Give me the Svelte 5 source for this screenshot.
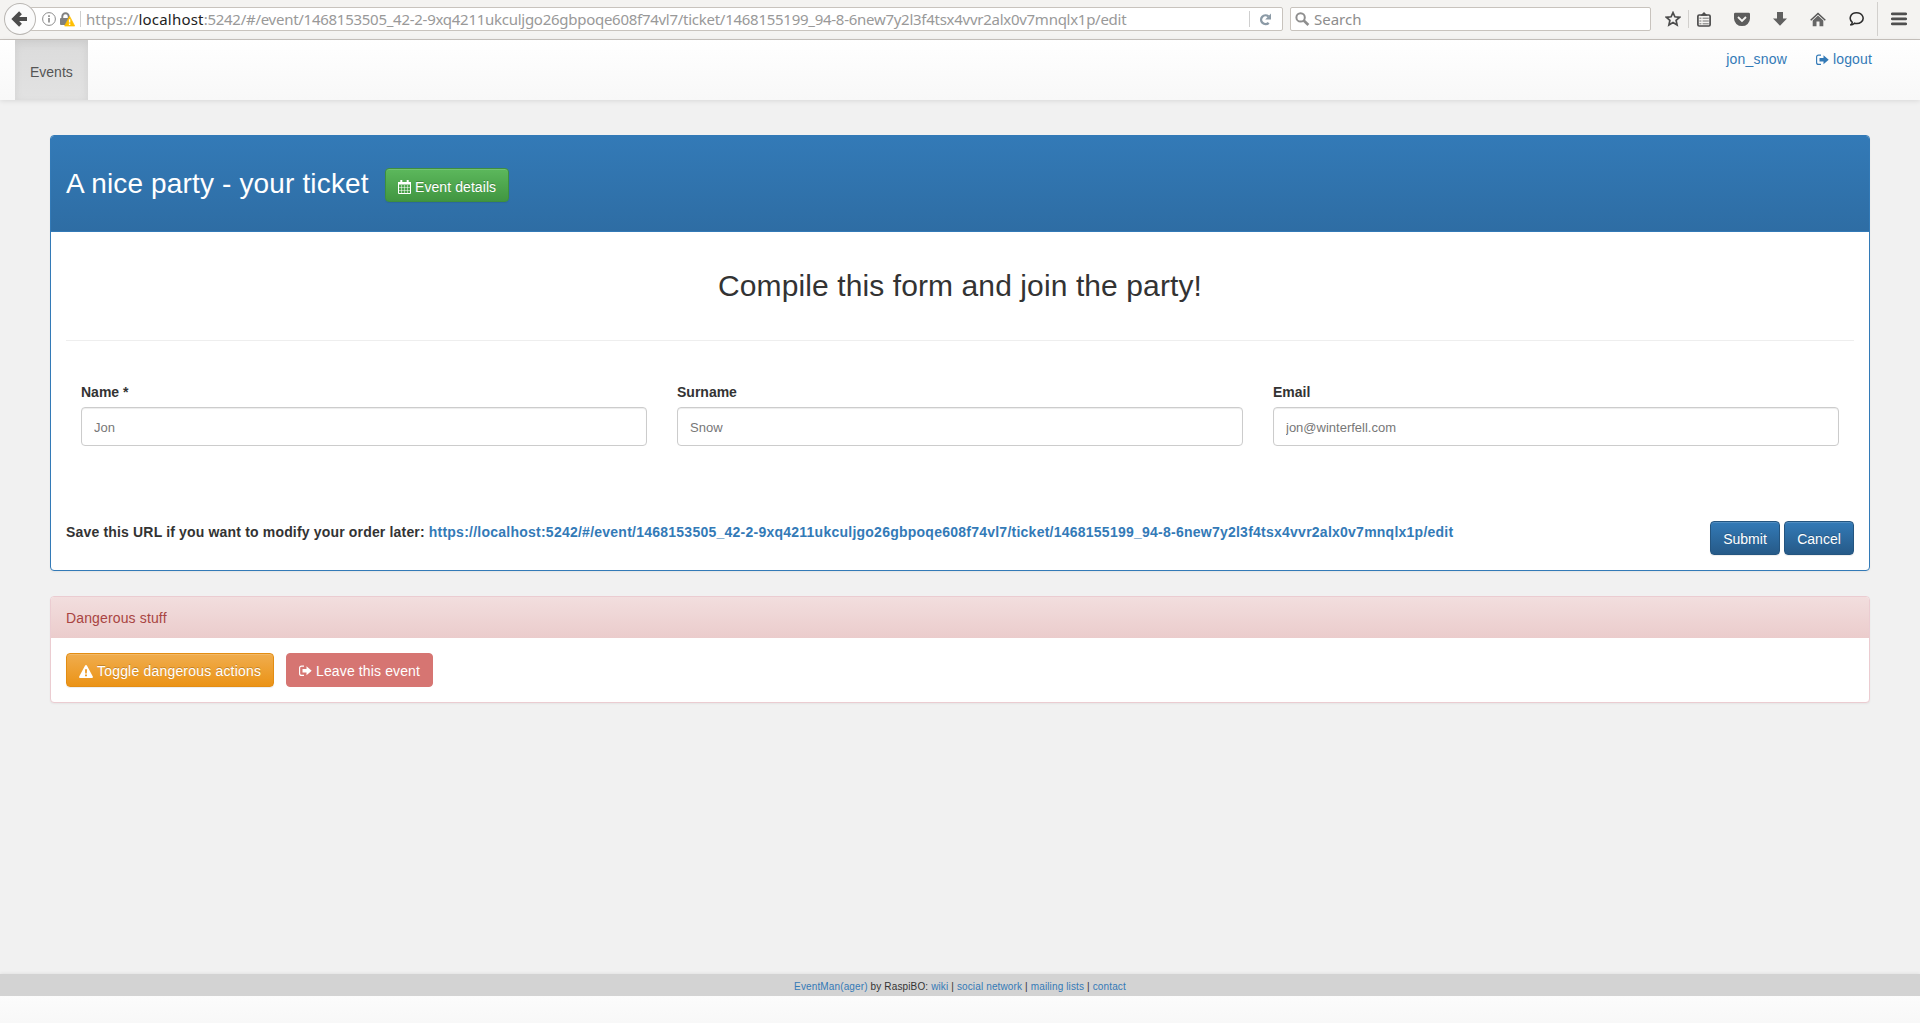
<script>
  const urlTail = ':5242/#/event/1468153505_42-2-9xq4211ukculjgo26gbpoqe608f74vl7/ticket/1468155199_94-8-6new7y2l3f4tsx4vvr2alx0v7mnqlx1p/edit';
  const fields = [
    { label: 'Name *', hint: 'Jon' },
    { label: 'Surname', hint: 'Snow' },
    { label: 'Email', hint: 'jon@winterfell.com' }
  ];
</script>

{#snippet signOut()}
  <svg class="fa out" width="13" height="12" viewBox="0 0 13 12">
    <path d="M5 1.1H2.6Q.6 1.1.6 3.1V8.4Q.6 10.4 2.6 10.4H5" fill="none" stroke="currentColor" stroke-width="1.15" />
    <path d="M3.5 4h4V1.3L12.7 5.8 7.5 10.3V7.6h-4z" fill="currentColor" />
  </svg>
{/snippet}

<div class="page">
  <header class="toolbar">
    <div class="address">
      <span class="back">
        <svg width="32" height="32" viewBox="0 0 32 32"><path d="M16.5 9.8 10.2 16l6.3 6.2M11 16h12" fill="none" stroke="#4c4c4c" stroke-width="4" /></svg>
      </span>
      <svg class="info" width="14" height="14" viewBox="0 0 14 14">
        <circle cx="7" cy="7" r="6.4" fill="none" stroke="#8c8c8c" />
        <path d="M7 6v4.5M7 3.2v1.7" stroke="#8c8c8c" stroke-width="1.7" />
      </svg>
      <svg class="lock" width="15" height="15" viewBox="0 0 15 15">
        <path d="M2.3 6.5V4.5a3.2 3.2 0 0 1 6.4 0v2" fill="none" stroke="#808080" stroke-width="1.9" />
        <rect x="0" y="6" width="10.5" height="7" rx="1" fill="#808080" />
        <path d="M9.6 4.2 14.7 14H4.6z" fill="#ffbf00" stroke="#ffbf00" stroke-width=".7" stroke-linejoin="round" />
        <path d="M9.6 7.2v3.3M9.6 11.4v1.5" stroke="#fff" stroke-width="1.4" />
      </svg>
      <span class="bar"></span>
      <span class="url"><span class="scheme">https://</span><b>localhost</b>{urlTail}</span>
      <span class="bar"></span>
      <svg class="reload" width="13" height="13" viewBox="0 0 13 13">
        <path d="M9.4 3.4A4.4 4.4 0 1 0 9.7 9.8" fill="none" stroke="#8b9aa6" stroke-width="2.4" />
        <path d="M12 .6V6.4H6.2z" fill="#8b9aa6" />
      </svg>
    </div>
    <div class="search">
      <svg width="15" height="15" viewBox="0 0 15 15"><circle cx="5.6" cy="5.4" r="4.2" fill="none" stroke="#8e8e8e" stroke-width="2" /><path d="M8.7 8.5 13.4 13" stroke="#8e8e8e" stroke-width="2.6" /></svg>
      <span>Search</span>
    </div>
    <div class="tools">
      <svg width="16" height="16" viewBox="0 0 16 16"><path d="M8 1.6 9.9 5.8l4.7.5-3.5 3.1 1 4.6L8 11.6 3.9 14l1-4.6L1.4 6.3l4.7-.5z" fill="none" stroke="#4c4c4c" stroke-width="1.7" /></svg>
      <span class="rule short"></span>
      <svg width="14" height="15" viewBox="0 0 14 15">
        <rect x=".9" y="3" width="12.2" height="11" rx="1.3" fill="#f4f3f1" stroke="#4c4c4c" stroke-width="1.7" />
        <path d="M3.3 3.8 7 .1l3.7 3.7z" fill="#4c4c4c" />
        <path d="M2.4 6.2h2m-2 2.8h2m-2 2.8h2M5.6 6.2h6.2M5.6 9h6.2m-6.2 2.8h6.2" stroke="#666" stroke-width=".9" />
      </svg>
      <svg width="16" height="15" viewBox="0 0 16 15"><path d="M1.4.7h13.2q1.4 0 1.4 1.4v4.5a8 7.5 0 0 1-16 0V2.1q0-1.4 1.4-1.4z" fill="#5c5c5c" /><path d="M4 5l4 3.9L12 5" fill="none" stroke="#f4f3f1" stroke-width="1.9" /></svg>
      <svg width="14" height="14" viewBox="0 0 14 14"><path d="M4 0h6v6.5h4L7 13.8 0 6.5h4z" fill="#606060" /></svg>
      <svg width="16" height="15" viewBox="0 0 16 15"><path d="M.7 8.2 8 1.5l7.3 6.7" fill="none" stroke="#555" stroke-width="1.5" /><path d="M2.7 8.4 8 3.6l5.3 4.8v5.8H9.5V9.6h-3v4.6H2.7z" fill="#666" /></svg>
      <svg width="15" height="14" viewBox="0 0 15 14"><path d="M3.3 10.3C-.6 7.2 1.2.8 7.5.8s8.6 6.1 4.6 9.3c-1.6 1.3-4.4 1.7-6.6 1.1C4.4 12.5 3 13 1.3 13c1.3-.6 2-1.4 2-2.7z" fill="none" stroke="#2c2c2c" stroke-width="1.5" /></svg>
      <span class="rule tall"></span>
      <svg width="16" height="14" viewBox="0 0 16 14"><path d="M1.3 1.8h13.4M1.3 6.8h13.4M1.3 11.8h13.4" stroke="#4f4f4f" stroke-width="2.8" stroke-linecap="round" /></svg>
    </div>
  </header>

  <nav class="navbar">
    <a class="tab" href="#/events">Events</a>
    <div class="user">
      <a class="who" href="#/user">jon_snow</a>
      <a class="logout" href="#/logout">{@render signOut()}<span>logout</span></a>
    </div>
  </nav>

  <main>
    <section class="panel primary">
      <div class="heading">
        <h1>A nice party - your ticket</h1>
        <button class="btn success">
          <svg class="fa" width="13" height="14" viewBox="0 0 13 14">
            <path d="M.5 2.5h12v11H.5z" fill="none" stroke="currentColor" />
            <path d="M0 2h13v2.5H0zM2.3 0h2v4h-2zM8.7 0h2v4h-2z" fill="currentColor" />
            <path d="M3.5 5v8.5M6.5 5v8.5M9.5 5v8.5M.5 7.500h12M.5 10.500h12" stroke="currentColor" stroke-width=".5" />
          </svg><span>Event details</span>
        </button>
      </div>
      <div class="body">
        <h2><span>Compile this form and join the party!</span></h2>
        <hr />
        <form class="fields">
          {#each fields as field}
            <label><span>{field.label}</span><input type="text" placeholder={field.hint} /></label>
          {/each}
        </form>
        <div class="save">
          <strong><span class="note">Save this URL if you want to modify your order later:</span> <a href="#/edit">https://localhost{urlTail}</a></strong>
          <div class="actions">
            <button class="btn blue">Submit</button>
            <button class="btn blue">Cancel</button>
          </div>
        </div>
      </div>
    </section>

    <section class="panel danger">
      <div class="heading">Dangerous stuff</div>
      <div class="body">
        <button class="btn warning">
          <svg class="fa" width="14" height="13" viewBox="0 0 14 13">
            <path fill-rule="evenodd" d="M7 0q.6 0 .9.6L13.8 11.6q.4 1.4-.8 1.4H1q-1.2 0-.8-1.4L6.1.6Q6.400 0 7 0zM5.900 4.200l.3 4.300h1.600l.3-4.300zM6 9.400v1.800h2V9.400z" fill="currentColor" />
          </svg><span>Toggle dangerous actions</span>
        </button>
        <button class="btn leave">{@render signOut()}<span>Leave this event</span></button>
      </div>
    </section>
  </main>

  <footer>
    <div class="credits"><p><a href="#/about">EventMan(ager)</a> by RaspiBO: <a href="#/wiki">wiki</a> | <a href="#/social">social network</a> | <a href="#/lists">mailing lists</a> | <a href="#/contact">contact</a></p></div>
  </footer>
</div>

<style>
  :global(body) { margin: 0; background: #f1f1f1; }
  .page, .page * { box-sizing: border-box; }
  .page {
    height: 1023px;
    display: flex;
    flex-direction: column;
    overflow: hidden;
    background: #f1f1f1;
    color: #333;
    font: 14px/20px "Liberation Sans", Arial, sans-serif;
  }
  a { color: #337ab7; text-decoration: none; white-space: nowrap; }
  svg { display: block; flex: none; }

  .toolbar {
    height: 40px;
    flex: none;
    display: flex;
    align-items: flex-start;
    padding: 7px 0 0 20px;
    background: #f4f3f1;
    border-bottom: 1px solid #c8c3be;
    font: 15px/22px "Noto Sans", sans-serif;
  }
  .address, .search {
    height: 24px;
    display: flex;
    align-items: center;
    background: #fff;
    border: 1px solid #c8c3bd;
    border-radius: 2px;
  }
  .address { width: 1263px; }
  .back {
    width: 32px;
    height: 32px;
    flex: none;
    margin-left: -17px;
    border-radius: 50%;
    background: #fafafa;
    box-shadow: inset 0 0 0 1px #b9b6b2;
  }
  .info { margin-left: 6px; }
  .lock { margin-left: 4px; }
  .bar { width: 1px; height: 16px; flex: none; background: #cfcfcf; }
  .lock + .bar { margin-left: 5px; }
  .url { width: 1162px; padding-left: 5px; margin-right: 6px; color: #999; white-space: nowrap; letter-spacing: -0.27px; }
  .scheme { letter-spacing: 0.1px; }
  .url b { font-weight: 400; color: #222; letter-spacing: 0.2px; }
  .reload { margin-left: 9px; }
  .search { width: 361px; margin-left: 7px; padding-left: 4px; color: #8d8d8d; }
  .search span { margin-left: 4px; }
  .tools { display: flex; align-items: center; height: 24px; margin-left: 14px; }
  .tools .rule { background: #d2d0cd; width: 1px; }
  .short { height: 18px; margin: 0 8px 0 7px; }
  .tall { height: 34px; margin: 0 13px 0 13px; }
  .tools svg + svg { margin-left: 23px; }

  .navbar {
    height: 60px;
    flex: none;
    display: flex;
    justify-content: space-between;
    padding: 0 48px 0 15px;
    background: linear-gradient(#fff, #f8f8f8);
    box-shadow: 0 1px 5px rgba(0, 0, 0, 0.1);
  }
  .tab {
    width: 73px;
    padding: 22px 0 0 15px;
    color: #555;
    background: linear-gradient(#dbdbdb, #e2e2e2);
    box-shadow: inset 0 3px 9px rgba(0, 0, 0, 0.075);
  }
  .user { display: flex; padding-top: 9px; }
  .who { letter-spacing: 0.2px; }
  .logout { display: flex; margin-left: 29px; letter-spacing: 0.15px; }
  .out { margin-top: 5px; }
  .logout span { margin-left: 4px; }

  main { flex: 1; padding: 35px 50px 0; }
  .panel { background: #fff; border: 1px solid; border-radius: 4px; box-shadow: 0 1px 2px rgba(0, 0, 0, 0.05); }
  .primary { height: 436px; border-color: #337ab7; margin-bottom: 25px; }
  .primary .heading {
    height: 96px;
    display: flex;
    padding: 28px 15px 0;
    background: linear-gradient(#337ab7, #2e6da4);
    border-bottom: 1px solid #337ab7;
    border-radius: 3px 3px 0 0;
    color: #fff;
  }
  h1, h2, p { margin: 0; font-weight: 500; }
  h1 { width: 319px; font-size: 28px; line-height: 40px; white-space: nowrap; font-weight: 400; letter-spacing: 0.15px; }
  .primary .body { padding: 0 15px; }
  h2 { padding-top: 35px; text-align: center; font-size: 30px; line-height: 37px; font-weight: 400; letter-spacing: 0.1px; }
  hr { margin: 36px 0 0; border: 0; border-top: 1px solid #eee; }
  .fields { display: grid; grid-template-columns: repeat(3, 1fr); padding-top: 41px; }
  label { display: flex; flex-direction: column; padding: 0 15px; font-weight: 700; }
  label span { height: 25px; }
  input {
    height: 39px;
    padding: 2px 12px 0;
    border: 1px solid #ccc;
    border-radius: 4px;
    background: #fff;
    box-shadow: inset 0 1px 1px rgba(0, 0, 0, 0.075);
    font: 13px "Liberation Sans", Arial, sans-serif;
  }
  input::placeholder { color: #777; opacity: 1; }
  .save { display: flex; justify-content: space-between; padding-top: 75px; white-space: nowrap; }
  .save strong { padding-top: 1px; }
  .note { letter-spacing: 0.17px; }
  .save a { letter-spacing: 0.243px; }
  .actions { display: flex; gap: 4px; }

  .btn {
    height: 34px;
    display: flex;
    align-items: center;
    padding: 2px 12px 0;
    border: 1px solid;
    border-radius: 4px;
    color: #fff;
    font: 14px/20px "Liberation Sans", Arial, sans-serif;
    white-space: nowrap;
    text-shadow: 0 -1px 0 rgba(0, 0, 0, 0.2);
    box-shadow: inset 0 1px 0 rgba(255, 255, 255, 0.15), 0 1px 1px rgba(0, 0, 0, 0.075);
  }
  .btn .fa + span { margin-left: 4px; }
  .btn .out { margin-top: 0; }
  .success { width: 124px; margin-top: 4px; padding-top: 4px; letter-spacing: 0.08px; background: linear-gradient(#5cb85c, #419641); border-color: #3e8f3e; }
  .blue { width: 70px; justify-content: center; padding: 2px 0 0; background: linear-gradient(#337ab7, #265a88); border-color: #245580; }
  .warning { width: 208px; letter-spacing: 0.19px; background: linear-gradient(#f0ad4e, #eb9316); border-color: #e38d13; }
  .leave { width: 147px; letter-spacing: 0.13px; background: #d67572; border-color: #d67572; box-shadow: none; text-shadow: none; }

  .danger { height: 107px; border-color: #ebccd1; }
  .danger .heading {
    height: 41px;
    padding: 11px 15px;
    border-radius: 3px 3px 0 0;
    color: #a94442;
    letter-spacing: 0.14px;
    background: linear-gradient(#f2dede, #ebcccc);
  }
  .danger .body { display: flex; gap: 12px; padding: 15px; }

  footer { height: 49px; flex: none; background: linear-gradient(#fff, #f8f8f8); box-shadow: 0 -1px 3px rgba(0, 0, 0, 0.06); }
  .credits { height: 22px; display: flex; justify-content: center; background: #d3d3d3; }
  .credits p { font-size: 10px; line-height: 26px; white-space: nowrap; letter-spacing: 0.135px; }
</style>
